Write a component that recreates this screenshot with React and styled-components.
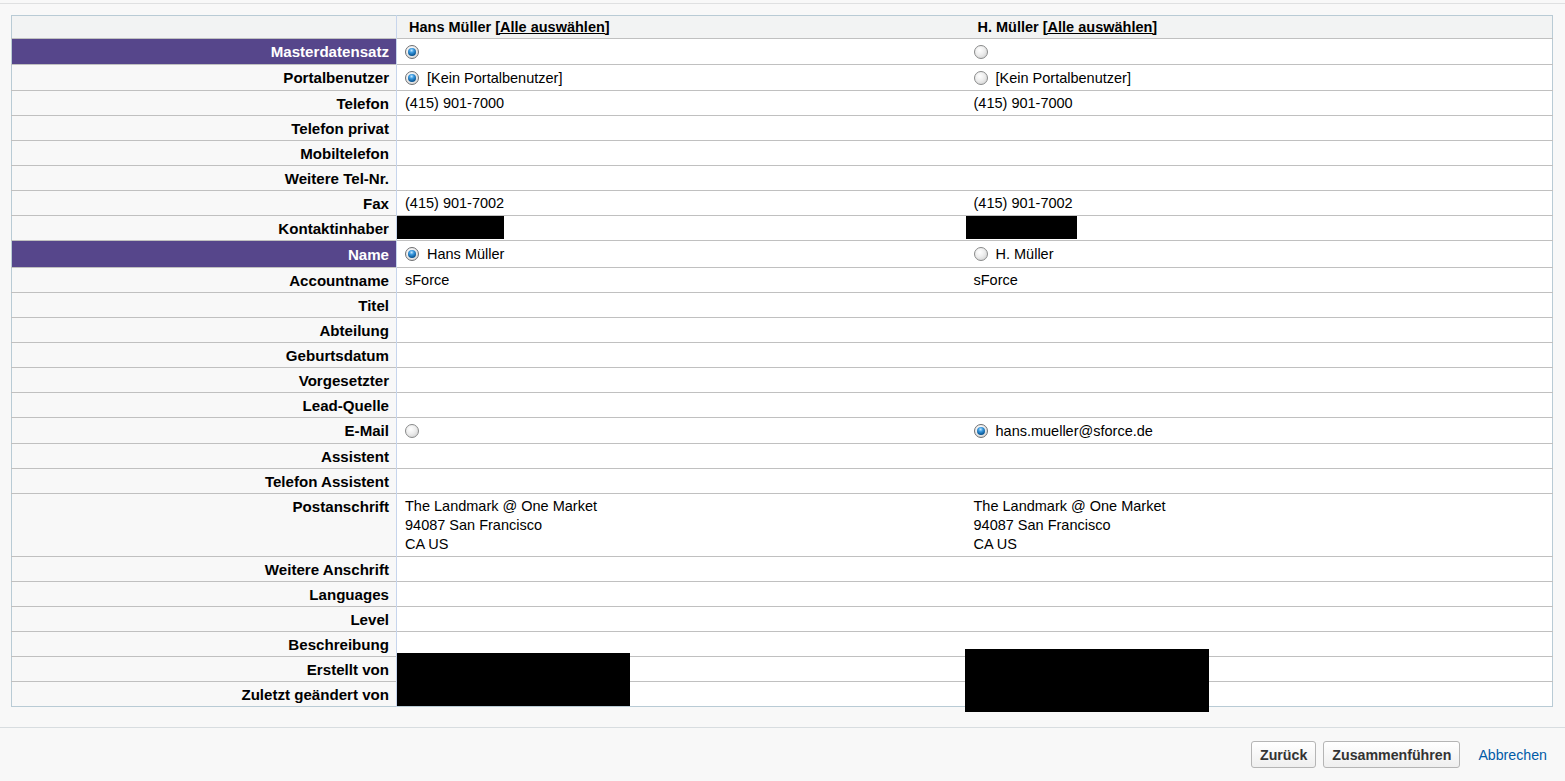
import React from "react";
import styled, { createGlobalStyle, css } from "styled-components";

const GlobalStyle = createGlobalStyle`
  html, body {
    margin: 0;
    padding: 0;
    background: #f8f8f8;
    font-family: "Liberation Sans", Arial, sans-serif;
  }
`;

const Page = styled.div`
  margin-top: 3px;
  border-top: 1px solid #dfe0e1;
  min-height: 777px;
  display: flex;
  flex-direction: column;
`;

const Body = styled.div`
  padding: 11px 12px 20px 11px;
`;

const Table = styled.table`
  width: 100%;
  border-collapse: collapse;
  table-layout: fixed;
  border: 1px solid #b9cbd5;
  font-size: 14.5px;
  color: #000;
`;

const HeadRow = styled.tr`
  background: #f2f3f3;
  border-bottom: 1px solid #c0c0c0;
`;

const HeadCell = styled.th`
  text-align: left;
  font-weight: bold;
  height: 22px;
  padding: 0 12px;
  line-height: 19px;
  ${({ $first }) =>
    $first &&
    css`
      border-right: 1px solid #c7d5ec;
    `}
`;

const SelectAll = styled.a`
  color: #000;
  text-decoration: underline;
  cursor: pointer;
`;

const Row = styled.tr`
  border-bottom: 1px solid #c0c0c0;
  &:last-child {
    border-bottom: none;
  }
`;

const Label = styled.td`
  text-align: right;
  font-weight: bold;
  font-size: 15.1px;
  vertical-align: top;
  padding: ${({ $tall }) => ($tall ? "4px 7px 2px 8px" : "3px 7px 2px 8px")};
  line-height: 19px;
  height: 19px;
  border-right: 1px solid #c7d5ec;
  background: ${({ $section }) => ($section ? "#56468b" : "#f8f8f8")};
  color: ${({ $section }) => ($section ? "#fff" : "#000")};
`;

const Cell = styled.td`
  position: relative;
  background: #fff;
  vertical-align: top;
  padding: ${({ $radio, $tall }) =>
    $radio ? ($tall ? "4px 8px 3px" : "4px 8px 2px") : "3px 8px 2px"};
  line-height: 19px;
  white-space: nowrap;
`;

const Choice = styled.span`
  display: inline-flex;
  align-items: center;
  gap: 8px;
  height: 19px;
  vertical-align: top;
`;

const Radio = styled.span`
  display: inline-block;
  width: 14px;
  height: 14px;
  margin-top: -2px;
  border-radius: 50%;
  box-sizing: border-box;
  border: 1px solid #8a8b8b;
  background: radial-gradient(circle at 40% 35%, #ffffff 0%, #ededed 45%, #c9c9c9 100%);
  position: relative;
  ${({ $checked }) =>
    $checked &&
    css`
      border-color: #6f7072;
      &::after {
        content: "";
        position: absolute;
        inset: 2px;
        border-radius: 50%;
        background: radial-gradient(circle at 45% 30%, #c4e8ff 0%, #3d9be0 30%, #0b5a99 70%, #073d6b 100%);
      }
    `}
`;

const Redact = styled.span`
  position: absolute;
  background: #000;
  left: ${({ $left }) => $left}px;
  top: ${({ $top }) => $top}px;
  width: ${({ $w }) => $w}px;
  height: ${({ $h }) => $h}px;
  z-index: 2;
`;

const Footer = styled.div`
  border-top: 1px solid #d8dde0;
  display: flex;
  justify-content: flex-end;
  align-items: center;
  gap: 7px;
  padding: 13px 18px 0 0;
`;

const Button = styled.button`
  font-family: "Liberation Sans", Arial, sans-serif;
  font-weight: bold;
  font-size: 14.2px;
  color: #333;
  height: 27px;
  padding: 0 8px;
  border: 1px solid #b5b5b5;
  border-radius: 3px;
  background: linear-gradient(#ffffff, #efefef);
  cursor: pointer;
`;

const CancelLink = styled.a`
  color: #015ba7;
  font-size: 14.2px;
  margin-left: 11px;
  cursor: pointer;
`;

const rows = [
  { label: "Masterdatensatz", section: true, a: { radio: true, checked: true }, b: { radio: true } },
  { label: "Portalbenutzer", a: { radio: true, checked: true, text: "[Kein Portalbenutzer]" }, b: { radio: true, text: "[Kein Portalbenutzer]" } },
  { label: "Telefon", a: { text: "(415) 901-7000" }, b: { text: "(415) 901-7000" } },
  { label: "Telefon privat" },
  { label: "Mobiltelefon" },
  { label: "Weitere Tel-Nr." },
  { label: "Fax", a: { text: "(415) 901-7002" }, b: { text: "(415) 901-7002" } },
  { label: "Kontaktinhaber", a: { redact: [0, 0, 107, 23] }, b: { redact: [0, 0, 111, 23] } },
  { label: "Name", section: true, tall: true, a: { radio: true, checked: true, text: "Hans Müller" }, b: { radio: true, text: "H. Müller" } },
  { label: "Accountname", a: { text: "sForce" }, b: { text: "sForce" } },
  { label: "Titel" },
  { label: "Abteilung" },
  { label: "Geburtsdatum" },
  { label: "Vorgesetzter" },
  { label: "Lead-Quelle" },
  { label: "E-Mail", a: { radio: true }, b: { radio: true, checked: true, text: "hans.mueller@sforce.de" } },
  { label: "Assistent" },
  { label: "Telefon Assistent" },
  {
    label: "Postanschrift",
    a: { lines: ["The Landmark @ One Market", "94087 San Francisco", "CA US"] },
    b: { lines: ["The Landmark @ One Market", "94087 San Francisco", "CA US"] },
  },
  { label: "Weitere Anschrift" },
  { label: "Languages" },
  { label: "Level" },
  { label: "Beschreibung" },
  { label: "Erstellt von", a: { redact: [0, -4, 233, 53] }, b: { redact: [-1, -8, 244, 63] } },
  { label: "Zuletzt geändert von" },
];

const Value = ({ v, tall }) => {
  if (!v) return <Cell>&nbsp;</Cell>;
  const redact = v.redact && (
    <Redact $left={v.redact[0]} $top={v.redact[1]} $w={v.redact[2]} $h={v.redact[3]} />
  );
  if (v.radio) {
    return (
      <Cell $radio $tall={tall}>
        <Choice>
          <Radio $checked={v.checked} />
          {v.text && <span>{v.text}</span>}
        </Choice>
      </Cell>
    );
  }
  if (v.lines) {
    return (
      <Cell>
        {v.lines.map((l) => (
          <div key={l}>{l}</div>
        ))}
      </Cell>
    );
  }
  return (
    <Cell>
      {redact}
      {v.text || "\u00a0"}
    </Cell>
  );
};

const App = () => {
  return (
    <>
      <GlobalStyle />
      <Page>
        <Body>
          <Table>
            <colgroup>
              <col style={{ width: "385px" }} />
              <col style={{ width: "569px" }} />
              <col />
            </colgroup>
            <thead>
              <HeadRow>
                <HeadCell $first />
                <HeadCell>
                  Hans Müller <SelectAll>[Alle auswählen]</SelectAll>
                </HeadCell>
                <HeadCell>
                  H. Müller <SelectAll>[Alle auswählen]</SelectAll>
                </HeadCell>
              </HeadRow>
            </thead>
            <tbody>
              {rows.map((r) => (
                <Row key={r.label}>
                  <Label $section={r.section} $tall={r.tall}>
                    {r.label}
                  </Label>
                  <Value v={r.a} tall={r.tall} />
                  <Value v={r.b} tall={r.tall} />
                </Row>
              ))}
            </tbody>
          </Table>
        </Body>
        <Footer>
          <Button>Zurück</Button>
          <Button>Zusammenführen</Button>
          <CancelLink>Abbrechen</CancelLink>
        </Footer>
      </Page>
    </>
  );
};

export default App;
